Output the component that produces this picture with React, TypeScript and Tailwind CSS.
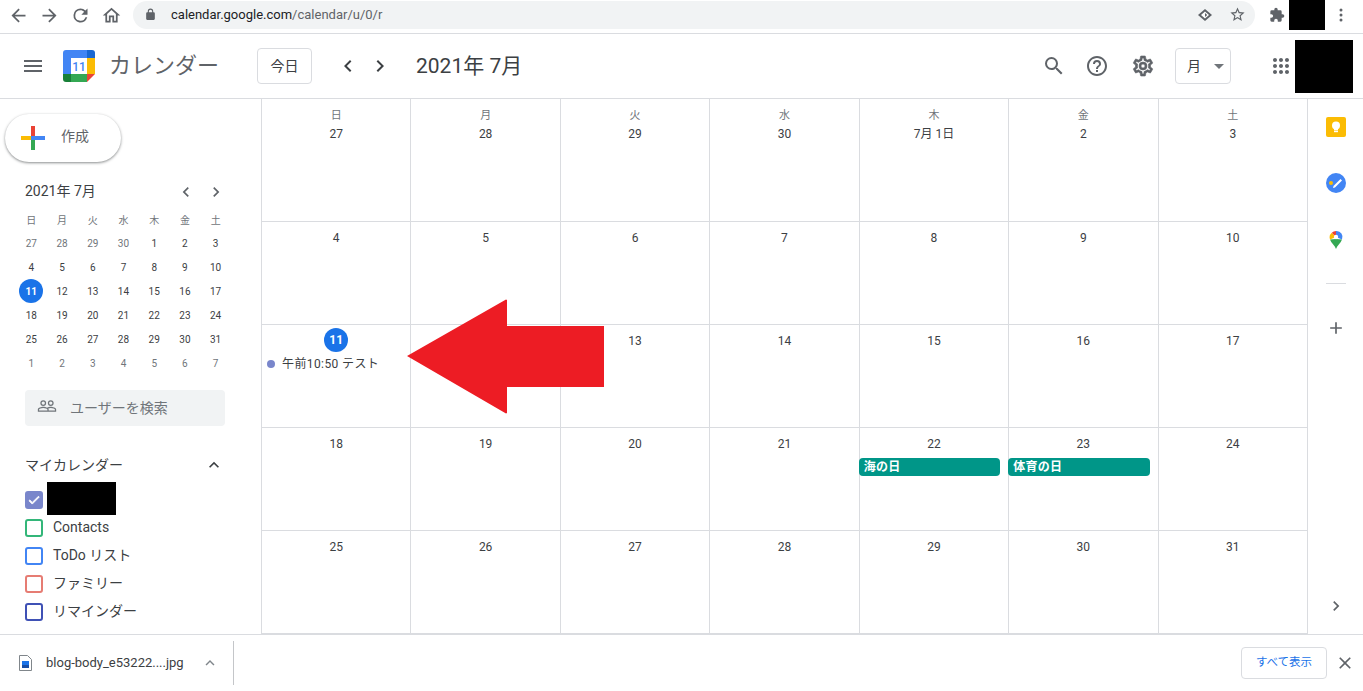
const weekdays = ["日", "月", "火", "水", "木", "金", "土"];
const miniDays = [27, 28, 29, 30, 1, 2, 3, 4, 5, 6, 7, 8, 9, 10, 11, 12, 13, 14, 15, 16, 17, 18, 19, 20, 21, 22, 23, 24, 25, 26, 27, 28, 29, 30, 31, 1, 2, 3, 4, 5, 6, 7];
const monthDays = [27, 28, 29, 30, "7月 1日", 2, 3, 4, 5, 6, 7, 8, 9, 10, 11, 12, 13, 14, 15, 16, 17, 18, 19, 20, 21, 22, 23, 24, 25, 26, 27, 28, 29, 30, 31];

function Icon({ d, size = 24, className = "" }: { d: string; size?: number; className?: string }) {
  return (
    <svg width={size} height={size} viewBox="0 0 24 24" className={className} fill="currentColor">
      <path d={d} />
    </svg>
  );
}

const chevronLeft = "M15.41 7.41 14 6l-6 6 6 6 1.41-1.41L10.83 12z";
const chevronRight = "M10 6 8.59 7.41 13.17 12l-4.58 4.59L10 18l6-6z";

function ChromeBar() {
  return (
    <div className="h-[34px] flex items-center border-b border-[#dadce0] bg-white text-[#5f6368] shrink-0">
      <div className="w-[133px] flex items-center pl-[8px] gap-[10px] -mt-[2px]">
        <Icon size={21} d="M20 11H7.83l5.59-5.59L12 4l-8 8 8 8 1.41-1.41L7.83 13H20z" />
        <Icon size={21} d="M12 4l-1.41 1.41L16.17 11H4v2h12.17l-5.58 5.59L12 20l8-8z" />
        <Icon size={21} d="M17.65 6.35A7.96 7.96 0 0 0 12 4a8 8 0 1 0 7.73 10h-2.08A6 6 0 1 1 12 6c1.66 0 3.14.69 4.22 1.78L13 11h7V4z" />
        <Icon size={21} d="M12 5.69l5 4.5V18h-2v-6H9v6H7v-7.81l5-4.5M12 3 2 12h3v8h6v-6h2v6h6v-8h3z" />
      </div>
      <div className="w-[1122px] h-[28px] -mt-[4px] rounded-full bg-[#f1f3f4] flex items-center pl-[11px] pr-[9px]">
        <Icon size={13} d="M18 8h-1V6A5 5 0 0 0 7 6v2H6a2 2 0 0 0-2 2v10c0 1.1.9 2 2 2h12a2 2 0 0 0 2-2V10a2 2 0 0 0-2-2zM9 6a3 3 0 0 1 6 0v2H9z" />
        <span className="ml-[14px] text-[13px] text-[#5f6368] flex-1">
          <span className="text-[#202124]">calendar.google.com</span>/calendar/u/0/r
        </span>
        <svg width="16" height="16" viewBox="0 0 16 16" className="mr-[16px]">
          <path d="M8 2 15 8 8 14 1 8z" fill="#5f6368" />
          <path d="M8 4.5 12 8 8 11.5 4 8z" fill="#fff" />
          <path d="M8 6 10.2 8 8 10z" fill="#5f6368" />
        </svg>
        <Icon size={17} d="M22 9.24l-7.19-.62L12 2 9.19 8.63 2 9.24l5.46 4.73L5.82 21 12 17.27 18.18 21l-1.63-7.03L22 9.24zM12 15.4l-3.76 2.27 1-4.28-3.32-2.88 4.38-.38L12 6.1l1.71 4.04 4.38.38-3.32 2.88 1 4.28L12 15.4z" />
      </div>
      <div className="flex items-center flex-1 -mt-[4px] pl-[14px]">
        <Icon size={16} d="M20.5 11H19V7a2 2 0 0 0-2-2h-4V3.5a2.5 2.5 0 0 0-5 0V5H4a2 2 0 0 0-2 2v3.8h1.5a2.7 2.7 0 0 1 0 5.4H2V20a2 2 0 0 0 2 2h3.8v-1.5a2.7 2.7 0 0 1 5.4 0V22H17a2 2 0 0 0 2-2v-4h1.5a2.5 2.5 0 0 0 0-5z" />
        <div className="ml-[4px] w-[36px] h-[30px] bg-black" />
        <svg width="4" height="14" viewBox="0 0 4 14" className="ml-[14px]" fill="#5f6368">
          <circle cx="2" cy="2" r="1.5" />
          <circle cx="2" cy="7" r="1.5" />
          <circle cx="2" cy="12" r="1.5" />
        </svg>
      </div>
    </div>
  );
}

function CalendarLogo({ size = 32 }: { size?: number }) {
  return (
    <svg width={size} height={size} viewBox="0 0 32 32">
      <path d="M3 0h21v8H8v16H0V3a3 3 0 0 1 3-3z" fill="#4285f4" />
      <path d="M24 0h5a3 3 0 0 1 3 3v5h-8z" fill="#1967d2" />
      <rect x="24" y="8" width="8" height="16" fill="#fbbc04" />
      <rect x="8" y="24" width="16" height="8" fill="#34a853" />
      <path d="M0 24h8v8H3a3 3 0 0 1-3-3z" fill="#188038" />
      <path d="M24 24h8l-8 8z" fill="#ea4335" />
      <rect x="8" y="8" width="16" height="16" fill="#fff" />
      <text x="16" y="21" textAnchor="middle" fontSize="12" fill="#4285f4" fontFamily="Roboto, sans-serif" fontWeight="500">11</text>
    </svg>
  );
}

function AppHeader() {
  return (
    <header className="h-[65px] flex items-center border-b border-[#dadce0] shrink-0 text-[#5f6368]">
      <div className="w-[63px] pl-[21px]">
        <Icon d="M3 18h18v-2H3v2zm0-5h18v-2H3v2zm0-7v2h18V6H3z" />
      </div>
      <CalendarLogo />
      <span className="ml-[14px] w-[148px] text-[22px] leading-none">カレンダー</span>
      <button className="w-[55px] h-[36px] border border-[#dadce0] rounded text-[14px] text-[#3c4043] flex items-center justify-center">今日</button>
      <div className="ml-[24px] flex items-center gap-[8px] text-[#3c4043]">
        <Icon d={chevronLeft} />
        <Icon d={chevronRight} />
      </div>
      <span className="ml-[24px] text-[21px] text-[#3c4043] leading-none flex-1">2021年 7月</span>
      <div className="flex items-center">
        <Icon className="ml-[1px]" d="M15.5 14h-.79l-.28-.27A6.47 6.47 0 0 0 16 9.5 6.5 6.5 0 1 0 9.5 16c1.61 0 3.09-.59 4.23-1.57l.27.28v.79l5 4.99L20.49 19l-4.99-5zm-6 0C7.01 14 5 11.99 5 9.5S7.01 5 9.5 5 14 7.01 14 9.5 11.99 14 9.5 14z" />
        <Icon className="ml-[19px]" d="M11 18h2v-2h-2v2zm1-16C6.48 2 2 6.48 2 12s4.48 10 10 10 10-4.48 10-10S17.52 2 12 2zm0 18c-4.41 0-8-3.59-8-8s3.59-8 8-8 8 3.59 8 8-3.59 8-8 8zm0-14a4 4 0 0 0-4 4h2c0-1.1.9-2 2-2s2 .9 2 2c0 2-3 1.75-3 5h2c0-2.25 3-2.5 3-5a4 4 0 0 0-4-4z" />
        <Icon className="ml-[22px] stroke-current stroke-[0.6]" d="M19.43 12.98c.04-.32.07-.64.07-.98s-.03-.66-.07-.98l2.11-1.65c.19-.15.24-.42.12-.64l-2-3.46a.5.5 0 0 0-.61-.22l-2.49 1a7.3 7.3 0 0 0-1.69-.98l-.38-2.65A.49.49 0 0 0 14 2h-4c-.25 0-.46.18-.49.42l-.38 2.65c-.61.25-1.17.59-1.69.98l-2.49-1a.5.5 0 0 0-.61.22l-2 3.46c-.13.22-.07.49.12.64l2.11 1.65c-.04.32-.07.65-.07.98s.03.66.07.98l-2.11 1.65c-.19.15-.24.42-.12.64l2 3.46c.12.22.39.3.61.22l2.49-1c.52.4 1.08.73 1.69.98l.38 2.65c.03.24.24.42.49.42h4c.25 0 .46-.18.49-.42l.38-2.65c.61-.25 1.17-.59 1.69-.98l2.49 1c.23.09.49 0 .61-.22l2-3.46c.12-.22.07-.49-.12-.64l-2.11-1.65zM17.45 11.27c.04.31.05.52.05.73s-.02.43-.05.73l-.14 1.13.89.7 1.08.84-.7 1.21-1.27-.51-1.04-.42-.9.68c-.43.32-.84.56-1.25.73l-1.06.43-.16 1.13-.2 1.35h-1.4l-.19-1.35-.16-1.13-1.06-.43c-.43-.18-.83-.41-1.23-.71l-.91-.7-1.06.43-1.27.51-.7-1.21 1.08-.84.89-.7-.14-1.13c-.03-.31-.05-.54-.05-.74s.02-.43.05-.73l.14-1.13-.89-.7-1.08-.84.7-1.21 1.27.51 1.04.42.9-.68c.43-.32.84-.56 1.25-.73l1.06-.43.16-1.13.2-1.35h1.39l.19 1.35.16 1.13 1.06.43c.43.18.83.41 1.23.71l.91.7 1.06-.43 1.27-.51.7 1.21-1.07.85-.89.7.14 1.13zM12 8a4 4 0 1 0 0 8 4 4 0 0 0 0-8zm0 6a2 2 0 1 1 0-4 2 2 0 0 1 0 4z" />
        <button className="ml-[20px] w-[56px] h-[36px] border border-[#dadce0] rounded flex items-center pl-[11px] text-[14px] text-[#3c4043]">
          <span>月</span>
          <span className="ml-[13px] w-0 h-0 border-x-[5px] border-x-transparent border-t-[5px] border-t-[#70757a]" />
        </button>
        <Icon className="ml-[38px]" d="M6 8c1.1 0 2-.9 2-2s-.9-2-2-2-2 .9-2 2 .9 2 2 2zm6 12c1.1 0 2-.9 2-2s-.9-2-2-2-2 .9-2 2 .9 2 2 2zm-6 0c1.1 0 2-.9 2-2s-.9-2-2-2-2 .9-2 2 .9 2 2 2zm0-6c1.1 0 2-.9 2-2s-.9-2-2-2-2 .9-2 2 .9 2 2 2zm6 0c1.1 0 2-.9 2-2s-.9-2-2-2-2 .9-2 2 .9 2 2 2zm6-6c1.1 0 2-.9 2-2s-.9-2-2-2-2 .9-2 2 .9 2 2 2zm-6 0c1.1 0 2-.9 2-2s-.9-2-2-2-2 .9-2 2 .9 2 2 2zm6 12c1.1 0 2-.9 2-2s-.9-2-2-2-2 .9-2 2 .9 2 2 2zm0-6c1.1 0 2-.9 2-2s-.9-2-2-2-2 .9-2 2 .9 2 2 2z" />
        <div className="ml-[2px] mr-[10px] w-[58px] h-[53px] bg-black" />
      </div>
    </header>
  );
}

function Checkbox({ className, checked = false }: { className: string; checked?: boolean }) {
  return (
    <span className={`w-[18px] h-[18px] rounded-[3px] border-2 flex items-center justify-center shrink-0 ${className}`}>
      {checked && (
        <svg width="14" height="14" viewBox="0 0 24 24" fill="#fff">
          <path d="M9 16.17 4.83 12l-1.42 1.41L9 19 21 7l-1.41-1.41z" stroke="#fff" strokeWidth="1.5" />
        </svg>
      )}
    </span>
  );
}

function Sidebar() {
  const calendars = [
    { name: "Contacts", color: "border-[#33b679]" },
    { name: "ToDo リスト", color: "border-[#4285f4]" },
    { name: "ファミリー", color: "border-[#e67c73]" },
    { name: "リマインダー", color: "border-[#3f51b5]" },
  ];
  return (
    <aside className="w-[261px] shrink-0 overflow-hidden text-[#3c4043]">
      <button className="mt-[15px] ml-[5px] w-[116px] h-[48px] rounded-full bg-white shadow-[0_1px_3px_0_rgba(60,64,67,0.45),0_1px_2px_0_rgba(60,64,67,0.2)] flex items-center pl-[16px]">
        <svg width="24" height="24" viewBox="0 0 24 24">
          <rect x="10" y="0" width="4" height="10" fill="#ea4335" />
          <rect x="14" y="10" width="10" height="4" fill="#4285f4" />
          <rect x="10" y="14" width="4" height="10" fill="#34a853" />
          <rect x="0" y="10" width="10" height="4" fill="#fbbc04" />
          <rect x="10" y="10" width="4" height="4" fill="#4285f4" />
        </svg>
        <span className="ml-[16px] -mt-[4px] text-[14px] text-[#5f6368]">作成</span>
      </button>

      <div className="mt-[18px] ml-[25px] mr-[35px] h-[22px] flex items-center justify-between">
        <span className="text-[14px] text-[#3c4043]">2021年 7月</span>
        <div className="flex gap-[10px] text-[#5f6368] mt-[1px]">
          <Icon size={20} d={chevronLeft} />
          <Icon size={20} d={chevronRight} />
        </div>
      </div>

      <div className="mt-[7px] ml-[16px] w-[215px] grid grid-cols-7 grid-rows-[22px] auto-rows-[24px] text-[10px] text-center">
        {weekdays.map((w) => (
          <span key={w} className="flex items-center justify-center text-[#70757a]">{w}</span>
        ))}
        {miniDays.map((d, i) => {
          const muted = i < 4 || i >= 35;
          if (d === 11) {
            return (
              <span key={i} className="flex items-center justify-center">
                <span className="w-[24px] h-[24px] rounded-full bg-[#1a73e8] text-white font-bold flex items-center justify-center">11</span>
              </span>
            );
          }
          return (
            <span key={i} className={`flex items-center justify-center ${muted ? "text-[#70757a]" : "text-[#3c4043]"}`}>{d}</span>
          );
        })}
      </div>

      <div className="mt-[15px] ml-[25px] w-[200px] h-[36px] rounded bg-[#f1f3f4] flex items-center pl-[12px] text-[#70757a]">
        <Icon size={20} className="-mt-[4px]" d="M16.5 13c-1.2 0-3.07.34-4.5 1-1.43-.67-3.3-1-4.5-1C5.33 13 1 14.08 1 16.25V19h22v-2.75c0-2.17-4.33-3.25-6.5-3.25zm-4 4.5h-10v-1.25c0-.54 2.56-1.75 5-1.75s5 1.21 5 1.75v1.25zm9 0H14v-1.25c0-.46-.2-.86-.52-1.22.88-.3 1.96-.53 3.02-.53 2.44 0 5 1.21 5 1.75v1.25zM7.5 12a3.5 3.5 0 1 0 0-7 3.5 3.5 0 0 0 0 7zm0-5.5a2 2 0 1 1 0 4 2 2 0 0 1 0-4zm9 5.5a3.5 3.5 0 1 0 0-7 3.5 3.5 0 0 0 0 7zm0-5.5a2 2 0 1 1 0 4 2 2 0 0 1 0-4z" />
        <span className="ml-[13px] text-[14px]">ユーザーを検索</span>
      </div>

      <div className="mt-[27px] ml-[25px] mr-[37px] h-[24px] flex items-center justify-between">
        <span className="text-[14px]">マイカレンダー</span>
        <Icon size={20} d="M12 8l-6 6 1.41 1.41L12 10.83l4.59 4.58L18 14z" />
      </div>

      <div className="ml-[25px] mt-[9px] flex flex-col">
        <div className="h-[28px] flex items-center">
          <Checkbox className="border-[#7986cb] bg-[#7986cb]" checked />
          <span className="ml-[4px] -mt-[3px] w-[69px] h-[33px] bg-black" />
        </div>
        {calendars.map((c) => (
          <div key={c.name} className="h-[28px] flex items-center">
            <Checkbox className={c.color} />
            <span className="ml-[10px] -mt-[2px] text-[14px]">{c.name}</span>
          </div>
        ))}
      </div>
    </aside>
  );
}

function MonthGrid() {
  return (
    <div className="flex-1 grid grid-cols-7 grid-rows-[123px_repeat(4,103px)] min-w-0">
      {monthDays.map((d, i) => (
        <div key={i} className="border-l border-b border-[#dadce0] flex flex-col items-center relative">
          {i < 7 && (
            <span className="mt-[9px] mb-[-5px] h-[15px] leading-[15px] text-[11px] text-[#70757a]">{weekdays[i]}</span>
          )}
          <span className="mt-[3px] h-[24px] flex items-center justify-center">
            {d === 11 ? (
              <span className="w-[24px] h-[24px] rounded-full bg-[#1a73e8] text-white text-[12px] font-bold flex items-center justify-center">11</span>
            ) : (
              <span className="pt-[1px] text-[12px] text-[#3c4043]">{d}</span>
            )}
          </span>
          {d === 11 && i === 14 && (
            <div className="mt-[3px] h-[18px] w-full flex items-center pl-[5px] text-[12px] tracking-[0.4px] text-[#3c4043]">
              <span className="w-[8px] h-[8px] rounded-full bg-[#7986cb]" />
              <span className="ml-[7px] whitespace-nowrap">午前10:50 テスト</span>
            </div>
          )}
          {d === 22 && <Holiday label="海の日" />}
          {d === 23 && <Holiday label="体育の日" />}
        </div>
      ))}
    </div>
  );
}

function Holiday({ label }: { label: string }) {
  return (
    <div className="mt-[3px] -ml-[1px] mr-[8px] self-stretch h-[18px] rounded-[4px] bg-[#009688] text-white text-[12px] tracking-[0.3px] font-bold flex items-center pl-[5px]">
      {label}
    </div>
  );
}

function SidePanel() {
  return (
    <aside className="w-[56px] shrink-0 border-l border-[#dadce0] flex flex-col items-center pl-[1px] pb-[18px] text-[#5f6368]">
      <svg width="20" height="20" viewBox="0 0 20 20" className="mt-[18px]">
        <rect width="20" height="20" rx="2" fill="#fbbc04" />
        <circle cx="10" cy="8.5" r="4" fill="#fff" />
        <rect x="8" y="11" width="4" height="2.5" fill="#fff" />
        <rect x="8" y="14" width="4" height="1.2" fill="#fff" />
      </svg>
      <svg width="20" height="20" viewBox="0 0 20 20" className="mt-[36px]">
        <circle cx="10" cy="10" r="10" fill="#4285f4" />
        <circle cx="5" cy="10" r="2" fill="#fbbc04" />
        <path d="M7.5 13 14.5 6 16 7.5 9 14.5l-2 .5z" fill="#fff" />
      </svg>
      <svg width="20" height="20" viewBox="0 0 20 20" className="mt-[36px]">
        <path d="M10 20c-1-3.5-5-6-6-9.5L10 10z" fill="#34a853" />
        <path d="M10 20c1-3.5 5-6 6-9.5L10 10z" fill="#34a853" />
        <path d="M4 10.5A6 6 0 0 1 5.8 3.8L10 8z" fill="#fbbc04" />
        <path d="M5.8 3.8A6 6 0 0 1 10 2v6z" fill="#ea4335" />
        <path d="M10 2a6 6 0 0 1 6 8.5L10 8z" fill="#4285f4" />
        <circle cx="10" cy="8" r="2.2" fill="#fff" />
      </svg>
      <div className="mt-[34px] w-[20px] h-[1px] bg-[#dadce0]" />
      <Icon size={20} className="mt-[34px]" d="M19 13h-6v6h-2v-6H5v-2h6V5h2v6h6v2z" />
      <Icon size={20} className="mt-auto" d={chevronRight} />
    </aside>
  );
}

function DownloadBar() {
  return (
    <div className="h-[57px] shrink-0 border-t border-[#dadce0] flex items-center text-[#5f6368]">
      <div className="w-[234px] flex items-center pl-[19px] border-r border-[#c4c6c9] h-[44px]">
        <svg width="13" height="16" viewBox="0 0 13 16">
          <path d="M.5.5h8l4 4v11H.5z" fill="#fff" stroke="#80868b" />
          <rect x="3" y="6" width="7" height="7" fill="#1a73e8" />
          <rect x="3" y="10" width="7" height="3" fill="#174ea6" />
        </svg>
        <span className="ml-[14px] text-[13px] text-[#3c4043]">blog-body_e53222....jpg</span>
        <Icon size={18} className="ml-[17px] text-[#80868b]" d="M12 8l-6 6 1.41 1.41L12 10.83l4.59 4.58L18 14z" />
      </div>
      <div className="flex-1" />
      <button className="w-[86px] h-[32px] rounded border border-[#dadce0] text-[11.5px] text-[#1a73e8]">すべて表示</button>
      <Icon size={20} className="ml-[8px] mr-[8px]" d="M19 6.41 17.59 5 12 10.59 6.41 5 5 6.41 10.59 12 5 17.59 6.41 19 12 13.41 17.59 19 19 17.59 13.41 12z" />
    </div>
  );
}

export default function App() {
  return (
    <div className="relative h-[691px] w-[1363px] overflow-hidden bg-white flex flex-col font-['Roboto','Noto_Sans_CJK_JP',sans-serif]">
      <ChromeBar />
      <AppHeader />
      <div className="flex h-[535px]">
        <Sidebar />
        <MonthGrid />
        <SidePanel />
      </div>
      <DownloadBar />
      {/* red arrow pasted over the screenshot */}
      <svg width="200" height="118" viewBox="0 0 200 118" className="absolute left-[406px] top-[298px]">
        <path d="M1 58 100 1.5 101 2V28H198V89H101V115L100 115.5z" fill="#ed1c24" />
      </svg>
    </div>
  );
}
